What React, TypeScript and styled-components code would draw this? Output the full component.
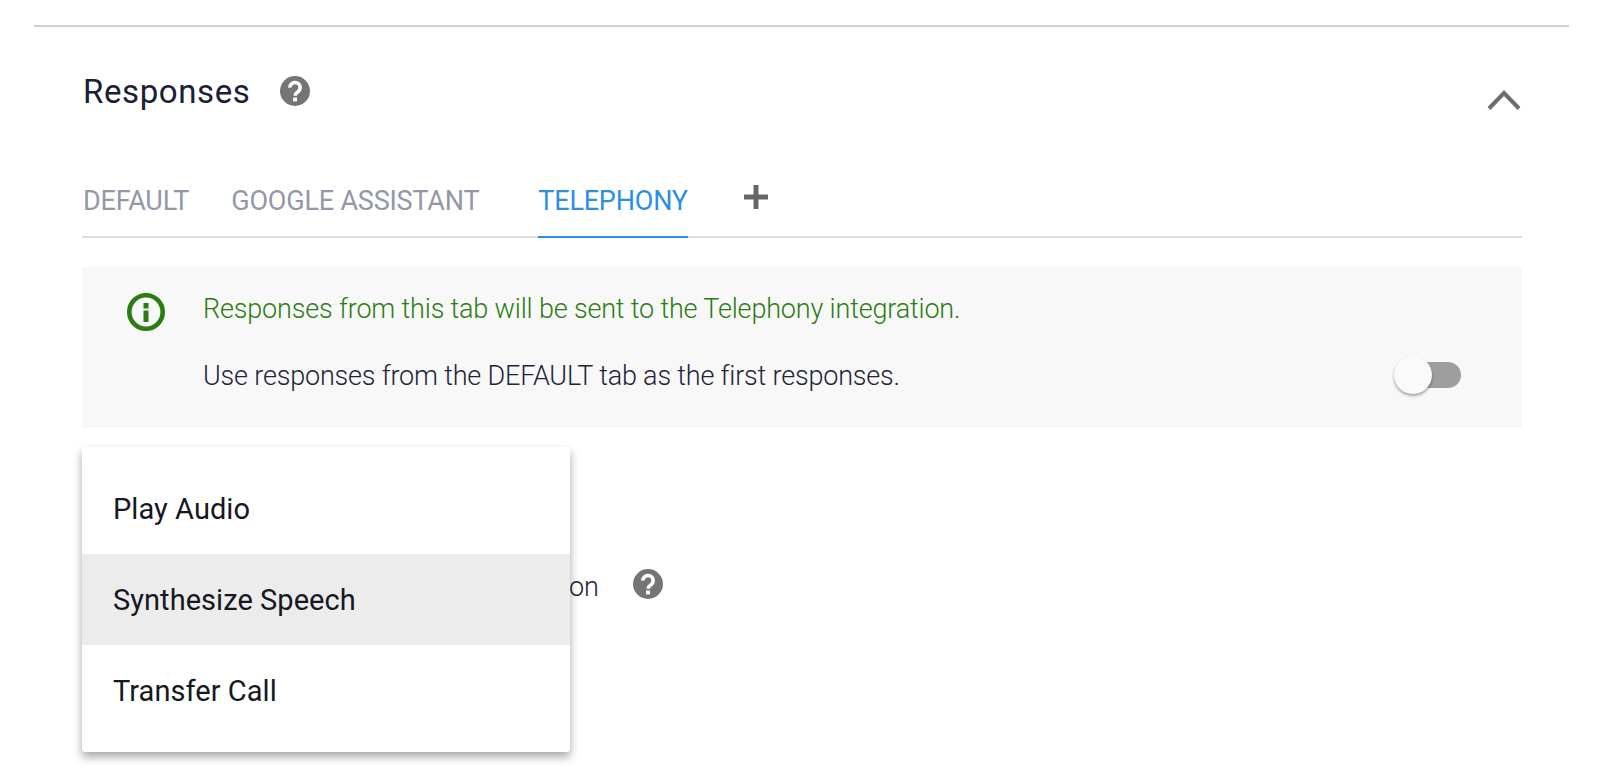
import React from "react";
import styled, { createGlobalStyle } from "styled-components";

const GlobalStyle = createGlobalStyle`
  html, body {
    margin: 0;
    background: #fff;
  }
  body {
    font-family: Roboto, "Liberation Sans", sans-serif;
    overflow: hidden;
  }
`;

const HelpIcon = () => (
  <svg width="30" height="30" viewBox="0 0 24 24">
    <circle cx="12" cy="12" r="12" fill="#757575" />
    <path d="M7.900 9.300a4.100 4.100 0 1 1 6.500 3.300c-1.400 1-2.300 1.500-2.300 3.200" fill="none" stroke="#fff" strokeWidth="2.800" />
    <rect x="10.500" y="17.200" width="3.100" height="3.100" fill="#fff" />
  </svg>
);

const App = () => {
  return (
    <>
      <GlobalStyle />
      <Page>
        <Section>
          <SectionHeader>
            <Title>Responses</Title>
            <HelpIcon />
            <Chevron viewBox="0 0 34 20">
              <path d="M2 18.500 L17 3 L32 18.500" fill="none" stroke="#6e6e6e" strokeWidth="4" />
            </Chevron>
          </SectionHeader>

          <Tabs>
            <Tab>DEFAULT</Tab>
            <Tab>GOOGLE ASSISTANT</Tab>
            <Tab $active>TELEPHONY</Tab>
            <AddTab viewBox="0 0 24 24">
              <path d="M9.500 0h5v9.500H24v5h-9.500V24h-5v-9.500H0v-5h9.500z" fill="#666" />
            </AddTab>
          </Tabs>

          <Banner>
            <InfoIcon viewBox="0 0 38 38">
              <circle cx="19" cy="19" r="16.700" fill="none" stroke="#2b7d13" strokeWidth="4.600" />
              <rect x="16.500" y="17.500" width="5" height="11.500" fill="#2b7d13" />
              <rect x="16.500" y="10" width="5" height="5.500" fill="#2b7d13" />
            </InfoIcon>
            <BannerText>
              <GreenLine>Responses from this tab will be sent to the Telephony integration.</GreenLine>
              <ToggleRow>
                <DarkLine>Use responses from the DEFAULT tab as the first responses.</DarkLine>
                <Switch>
                  <Knob />
                </Switch>
              </ToggleRow>
            </BannerText>
          </Banner>

          <Below>
            <EndRow>
              <EndLabel>on</EndLabel>
              <HelpIcon />
            </EndRow>
          </Below>

          <Menu>
            <MenuItem>Play Audio</MenuItem>
            <MenuItem $highlighted>Synthesize Speech</MenuItem>
            <MenuItem>Transfer Call</MenuItem>
          </Menu>
        </Section>
      </Page>
    </>
  );
};

export default App;

const Page = styled.div`
  width: 1600px;
  height: 777px;
  padding: 25px 31px 0 34px;
  box-sizing: border-box;
`;

const Section = styled.section`
  position: relative;
  border-top: 2px solid #d2cfcf;
  padding: 0 47px 0 49px;
`;

const SectionHeader = styled.div`
  display: flex;
  align-items: center;
  gap: 30px;
  height: 126px;
  box-sizing: border-box;
  padding-top: 2px;
`;

const Title = styled.h2`
  margin: 0;
  font-size: 33px;
  font-weight: 400;
  color: #1a2033;
  letter-spacing: 0.6px;
`;

const Chevron = styled.svg`
  width: 34px;
  height: 20px;
  margin-left: auto;
  margin-top: 17px;
  margin-right: 1px;
`;

const Tabs = styled.div`
  display: flex;
  align-items: flex-start;
  height: 83px;
  margin-left: -1px;
  border-bottom: 2px solid #dcdcdc;
`;

const Tab = styled.div<{ $active?: boolean }>`
  height: 85px;
  box-sizing: border-box;
  padding-top: 6px;
  margin-left: 1px;
  line-height: 84px;
  font-size: 27px;
  letter-spacing: -0.2px;
  color: ${(p) => (p.$active ? "#2b8fe3" : "#9298a8")};
  border-bottom: ${(p) => (p.$active ? "2px solid #2b8fe3" : "none")};
  margin-right: 41px;
  &:nth-child(2) {
    margin-right: 58px;
  }
  &:nth-child(3) {
    margin-right: 56px;
  }
`;

const AddTab = styled.svg`
  width: 24px;
  height: 24px;
  margin-top: 32px;
`;

const Banner = styled.div`
  display: flex;
  margin: 29px 0 0 -1px;
  height: 161px;
  background: #f8f8f8;
  padding: 27px 61px 0 45px;
  box-sizing: border-box;
`;

const InfoIcon = styled.svg`
  width: 38px;
  height: 38px;
  flex: none;
  margin-top: -1px;
`;

const BannerText = styled.div`
  flex: 1;
  margin-left: 38px;
`;

const GreenLine = styled.div`
  font-size: 27px;
  font-weight: 300;
  letter-spacing: -0.17px;
  line-height: 30px;
  color: #2b7d13;
`;

const ToggleRow = styled.div`
  display: flex;
  justify-content: space-between;
  align-items: center;
  margin-top: 27px;
  height: 50px;
`;

const DarkLine = styled.div`
  font-size: 27px;
  font-weight: 300;
  letter-spacing: -0.19px;
  color: #1f2438;
`;

const Switch = styled.div`
  position: relative;
  width: 55px;
  height: 26px;
  border-radius: 13px;
  background: #9e9e9e;
  margin-top: -2px;
`;

const Knob = styled.div`
  position: absolute;
  left: -12px;
  top: -6px;
  width: 38px;
  height: 38px;
  border-radius: 50%;
  background: #fafafa;
  box-shadow: 0 2px 3px rgba(0, 0, 0, 0.35);
`;

const Below = styled.div`
  padding-top: 137px;
`;

const EndRow = styled.div`
  display: flex;
  align-items: center;
  gap: 34px;
  padding-left: 486px;
`;

const EndLabel = styled.div`
  font-size: 27px;
  font-weight: 300;
  letter-spacing: -0.15px;
  color: #1f2438;
  margin-top: 6px;
`;

const Menu = styled.div`
  position: absolute;
  left: 48px;
  top: 420px;
  width: 488px;
  padding: 16px 0;
  background: #fff;
  border-radius: 3px;
  box-shadow: 0 5px 10px rgba(0, 0, 0, 0.35);
`;

const MenuItem = styled.div<{ $highlighted?: boolean }>`
  height: 91px;
  line-height: 92px;
  padding-left: 31px;
  font-size: 29px;
  letter-spacing: 0.05px;
  color: #16181f;
  background: ${(p) => (p.$highlighted ? "#ececec" : "transparent")};
`;
